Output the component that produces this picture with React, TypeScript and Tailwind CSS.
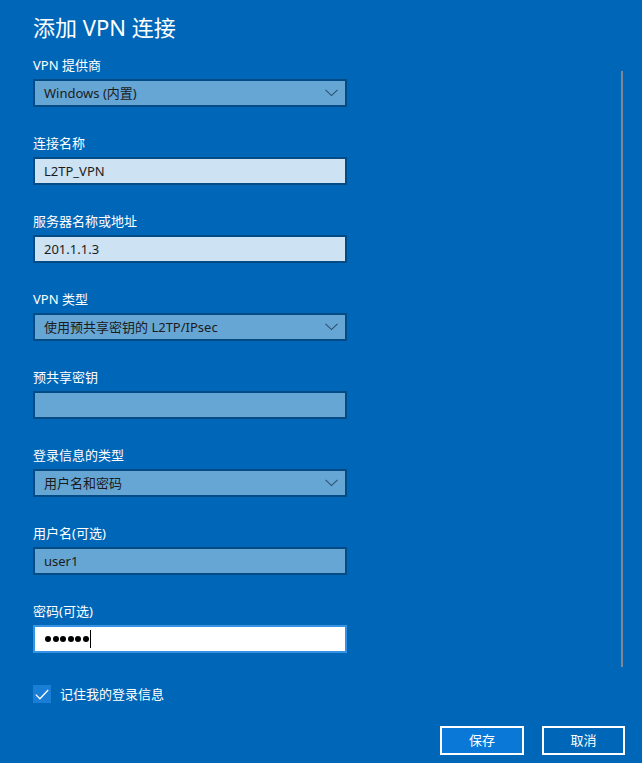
import React, { useState } from "react";

const FONT = '"Noto Sans", "Noto Sans CJK SC", sans-serif';

// Small chevron used in the dropdown boxes
const Chevron: React.FC = () => (
  <svg width="13" height="8" viewBox="0 0 13 8" className="shrink-0">
    <path d="M0.5 0.8 L6.5 6.6 L12.5 0.8" fill="none" stroke="#2f4f6c" strokeWidth="1.1" />
  </svg>
);

type FieldProps = {
  label: string;
  value?: string;
  kind: "select" | "light" | "plain";
};

const Field: React.FC<FieldProps> = ({ label, value, kind }) => {
  const fill = kind === "light" ? "bg-[#cde2f2]" : "bg-[#66a6d4]";
  return (
    <div className="flex flex-col">
      <p className="text-white text-[13px] leading-[18px]">{label}</p>
      <div
        className={`mt-[5px] w-[314px] h-[28px] border-2 border-[#024b85] ${fill} flex items-center justify-between pl-[9px] pr-[7px]`}
      >
        <span className="text-[#1b1b1b] text-[13px] leading-none">{value}</span>
        {kind === "select" && <Chevron />}
      </div>
    </div>
  );
};

const App: React.FC = () => {
  const [remember, setRemember] = useState<boolean>(true);

  return (
    <div
      className="relative w-[642px] h-[763px] bg-[#0067b8] overflow-hidden"
      style={{ fontFamily: FONT }}
    >
      {/* scrollbar */}
      <div className="absolute left-[621px] top-[71px] w-[2px] h-[596px] bg-[#7d8893]" />

      <div className="pl-[33px] pt-[12px]">
        <h1 className="text-white text-[22px] leading-[30px] font-normal">添加 VPN 连接</h1>

        <div className="mt-[14px] flex flex-col gap-[27px]">
          <Field label="VPN 提供商" value="Windows (内置)" kind="select" />
          <Field label="连接名称" value="L2TP_VPN" kind="light" />
          <Field label="服务器名称或地址" value="201.1.1.3" kind="light" />
          <Field label="VPN 类型" value="使用预共享密钥的 L2TP/IPsec" kind="select" />
          <Field label="预共享密钥" value="" kind="plain" />
          <Field label="登录信息的类型" value="用户名和密码" kind="select" />
          <Field label="用户名(可选)" value="user1" kind="plain" />

          {/* password (focused) */}
          <div className="flex flex-col">
            <p className="text-white text-[13px] leading-[18px]">密码(可选)</p>
            <div className="mt-[5px] w-[314px] h-[28px] border-2 border-[#3593e4] bg-white flex items-center pl-[10px]">
              <div className="flex gap-[1.6px]">
                {[0, 1, 2, 3, 4, 5].map((i) => (
                  <span key={i} className="w-[6px] h-[6px] rounded-full bg-black" />
                ))}
              </div>
              <span className="ml-[1px] w-px h-[18px] bg-black" />
            </div>
          </div>
        </div>

        {/* remember checkbox */}
        <label className="mt-[32px] flex items-center gap-[9px] cursor-pointer w-fit">
          <span
            onClick={() => setRemember(!remember)}
            className="w-[18px] h-[18px] bg-[#1a7dd6] flex items-center justify-center"
          >
            {remember && (
              <svg width="14" height="11" viewBox="0 0 14 11">
                <path d="M0.8 5.6 L4.9 9.7 L13.2 1" fill="none" stroke="white" strokeWidth="1.3" />
              </svg>
            )}
          </span>
          <span className="text-white text-[13px] leading-[18px]">记住我的登录信息</span>
        </label>
      </div>

      {/* footer buttons */}
      <div className="mt-[23px] flex justify-end gap-[18px] pr-[17px]">
        <button className="w-[84px] h-[29px] border-2 border-white bg-[#0a78d7] text-white text-[13px]">
          保存
        </button>
        <button className="w-[83px] h-[29px] border-2 border-white bg-[#0067b8] text-white text-[13px]">
          取消
        </button>
      </div>
    </div>
  );
};

export default App;
